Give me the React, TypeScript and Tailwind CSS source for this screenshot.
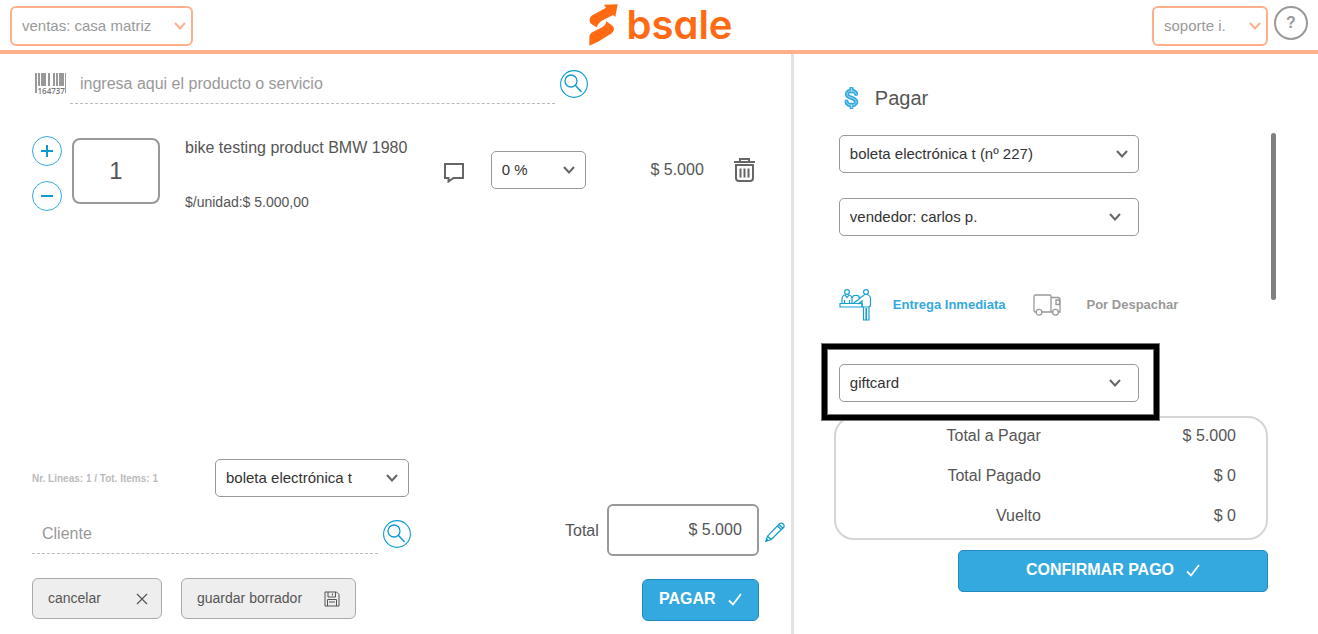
import { useState } from 'react';
import type { ReactNode } from 'react';
import clsx from 'clsx';

type SelectBoxProps = {
  label: string;
  options: string[];
  className?: string;
  tone?: 'dark' | 'orange';
  chevronClass?: string;
};

function Chevron({ className }: { className?: string }) {
  return (
    <svg viewBox="0 0 12 8" fill="none" stroke="currentColor" strokeWidth="2" className={className}>
      <path d="M1 1l5 5.500L11 1" />
    </svg>
  );
}

function SelectBox({ label, options, className, tone = 'dark', chevronClass = 'right-[11px]' }: SelectBoxProps) {
  return (
    <div className={clsx('relative', className)}>
      <select
        aria-label={label}
        className={clsx(
          'block w-full appearance-none bg-white pl-2.5 pr-7 text-[15px]',
          tone === 'orange'
            ? 'h-10 rounded-md border-2 border-[#ffb08a] text-[#999]'
            : 'h-[38px] rounded-[5px] border border-[#999] text-[#333]'
        )}
      >
        {options.map((option) => (
          <option key={option}>{option}</option>
        ))}
      </select>
      <Chevron
        className={clsx(
          'pointer-events-none absolute top-1/2 h-2 w-3 -translate-y-1/2',
          tone === 'orange' ? 'text-[#ffb08a]' : 'text-[#666]',
          chevronClass
        )}
      />
    </div>
  );
}

function SearchButton({ label }: { label: string }) {
  return (
    <button type="button" aria-label={label} className="h-7 w-7 shrink-0 rounded-full text-[#0b9bd0]">
      <svg viewBox="0 0 28 28" fill="none" stroke="currentColor" className="h-7 w-7">
        <circle cx="14" cy="14" r="13.400" strokeWidth="1.100" />
        <circle cx="11" cy="11" r="6" strokeWidth="1.300" />
        <path d="M15.300 15.300L21.500 22" strokeWidth="1.500" />
      </svg>
    </button>
  );
}

function RoundButton({ label, children }: { label: string; children: ReactNode }) {
  return (
    <button
      type="button"
      aria-label={label}
      className="flex h-[30px] w-[30px] items-center justify-center rounded-full border border-[#33a9dd] text-[#0b9bd0]"
    >
      <svg viewBox="0 0 12 12" stroke="currentColor" strokeWidth="2" className="h-3 w-3">
        {children}
      </svg>
    </button>
  );
}

function CheckIcon() {
  return (
    <svg viewBox="0 0 14 13" fill="none" stroke="currentColor" strokeWidth="1.800" className="h-[13px] w-3.5">
      <path d="M1 7.500L5 11.500L13 1" />
    </svg>
  );
}

function BarcodeIcon() {
  const bars = [
    [0, 2, 20], [3, 2, 13], [6, 3, 13], [9, 2, 13], [13, 2, 13],
    [18, 2, 13], [21, 2, 13], [24, 1, 13], [25, 4, 13], [30, 1, 20],
  ];
  return (
    <svg viewBox="0 0 31 22" fill="#999" className="h-[22px] w-[31px] shrink-0">
      {bars.map(([x, width, height]) => (
        <rect key={x} x={x} y="0" width={width} height={height} />
      ))}
      <text x="2.500" y="20.500" fontSize="8" fontFamily="Open Sans, sans-serif" fontWeight="600" fill="#777">
        164737
      </text>
    </svg>
  );
}

function Logo() {
  return (
    <a href="#" className="flex items-start gap-2 pl-1 text-[#ff6a13]">
      <svg viewBox="15 11 87 126" fill="currentColor" className="h-[42px] w-[29px]">
        <path d="M17 62Q16 51 25 45L66 22L60 13L101 12L94 50L87 44L56 60Q43 67 38 81L22 71Q17 68 17 62Z" />
        <path d="M16 136V112Q16 101 25 96L57 79Q67 73 66 63L83 74Q90 79 90 87Q89 95 81 100L42 124Z" />
      </svg>
      <span className="font-['Inter',sans-serif] text-[40px] leading-[42px] font-semibold [font-feature-settings:'cv11']">
        bsale
      </span>
    </a>
  );
}

function Header() {
  return (
    <header className="grid h-[54px] grid-cols-[1fr_auto_1fr] items-start border-b-4 border-[#ffb08a] px-2.5">
      <SelectBox
        label="Sucursal"
        tone="orange"
        options={['ventas: casa matriz']}
        className="mt-1.5 w-[183px]"
        chevronClass="right-[7px]"
      />
      <div className="pt-1">
        <Logo />
      </div>
      <div className="mt-1.5 flex items-start justify-end gap-1.5">
        <SelectBox
          label="Usuario"
          tone="orange"
          options={['soporte i.']}
          className="w-[116px]"
          chevronClass="right-[7px]"
        />
        <button
          type="button"
          className="h-[34px] w-[34px] rounded-full border-2 border-[#999] text-base leading-none font-bold text-[#999]"
        >
          ?
        </button>
      </div>
    </header>
  );
}

function ProductRow() {
  const [quantity, setQuantity] = useState('1');

  return (
    <div className="mt-8 flex items-start pr-[35px] pl-8">
      <div className="flex flex-col gap-[15px]">
        <RoundButton label="Agregar unidad">
          <path d="M6 0v12M0 6h12" />
        </RoundButton>
        <RoundButton label="Quitar unidad">
          <path d="M0 6h12" />
        </RoundButton>
      </div>
      <input
        aria-label="Cantidad"
        value={quantity}
        onChange={(e) => setQuantity(e.target.value)}
        className="mt-0.5 ml-2.5 h-[66px] w-[88px] rounded-lg border-2 border-[#999] text-center text-2xl text-[#555]"
      />
      <div className="ml-[25px] flex-1">
        <p className="text-base leading-6">bike testing product BMW 1980</p>
        <p className="mt-8 text-sm leading-5">$/unidad:$ 5.000,00</p>
      </div>
      <div className="flex h-[68px] items-center text-[#666]">
        <button type="button" aria-label="Comentario" className="mt-1.5">
          <svg viewBox="0 0 20 20" fill="none" stroke="currentColor" strokeWidth="2" className="h-5 w-5">
            <path d="M1 1h18v14H9.500L4.500 18.500V15H1z" />
          </svg>
        </button>
        <SelectBox label="Descuento" options={['0 %']} className="ml-[27px] w-[95px]" />
        <span className="w-[118px] text-right text-base text-[#555]">$ 5.000</span>
        <button type="button" aria-label="Eliminar" className="ml-[30px]">
          <svg viewBox="0 0 22 26" fill="none" stroke="currentColor" strokeWidth="2" className="h-[26px] w-[22px]">
            <path d="M0 5h21M6 4.500V2h9v2.500M2 8V21q0 3 3 3h11q3 0 3-3V8z" />
            <path d="M6.500 11.500v9M10.500 11.500v9M14.500 11.500v9" />
          </svg>
        </button>
      </div>
    </div>
  );
}

function SaleFooter() {
  const grayButton =
    'flex h-[41px] items-center justify-between rounded-md border border-[#aaa] bg-[#eee] px-[15px] pb-0.5 text-sm text-[#555]';

  return (
    <div className="mt-auto flex items-start justify-between pr-1.5 pb-[13px] pl-8">
      <div>
        <div className="flex items-center">
          <p className="w-[183px] text-[10px] font-bold text-[#bbb]">Nr. Lineas: 1 / Tot. Items: 1</p>
          <SelectBox label="Documento" options={['boleta electrónica t']} className="w-[194px]" />
        </div>
        <div className="mt-[17px] flex items-center gap-[5px]">
          <input
            aria-label="Cliente"
            placeholder="Cliente"
            className="h-10 w-[346px] border-b border-dashed border-[#bbb] px-2.5 text-base placeholder:text-[#999]"
          />
          <SearchButton label="Buscar cliente" />
        </div>
        <div className="mt-6 flex gap-[19px]">
          <button type="button" className={clsx(grayButton, 'w-[130px]')}>
            cancelar
            <svg viewBox="0 0 12 12" stroke="currentColor" strokeWidth="1.200" className="mt-0.5 -mr-0.5 h-3 w-3">
              <path d="M1 1l10 10M11 1L1 11" />
            </svg>
          </button>
          <button type="button" className={clsx(grayButton, 'w-[175px]')}>
            guardar borrador
            <svg viewBox="0 0 16 16" fill="none" stroke="currentColor" className="mt-0.5 h-4 w-4">
              <path d="M1 1h11.500L15 3.500V15H1z" />
              <path d="M3.500 15V8.500h9V15M4 1v5h7.500V1M8.500 2.500v2M5 11h6" />
            </svg>
          </button>
        </div>
      </div>
      <div className="mt-[45px]">
        <div className="flex items-center">
          <label htmlFor="total" className="mt-0.5 mr-2 text-base">
            Total
          </label>
          <input
            id="total"
            defaultValue="$ 5.000"
            className="h-[52px] w-[152px] rounded-md border-2 border-[#999] px-[15px] text-right text-base text-[#555]"
          />
          <button type="button" aria-label="Editar total" className="mt-1 ml-1.5 text-[#0b9bd0]">
            <svg viewBox="0 0 20 20" fill="none" stroke="currentColor" strokeWidth="1.200" className="h-5 w-5">
              <path d="M1 19.200l1.500-5L14.500 1.800q1.800-1.300 3.500 0t.800 3.500L6.200 17.500z" />
              <path d="M2.500 14.200l3.700 3.300M12.500 4l3.700 3.500M14 2.500l3.800 3.700M1 19l2-.700-1.300-1.300z" />
            </svg>
          </button>
        </div>
        <button
          type="button"
          className="mt-[23px] mr-[26px] ml-auto flex h-[42px] w-[117px] items-center justify-center gap-3 rounded-md border border-[#2489bd] bg-[#33a9df] pb-0.5 text-base font-bold text-white"
        >
          PAGAR
          <CheckIcon />
        </button>
      </div>
    </div>
  );
}

function DollarIcon() {
  const path = 'M12 7C12 3 3 2.500 3 7.200C3 11.500 12.200 10 12.200 15C12.200 19.500 2.500 19.500 2.500 14.500M7.500 1.500v3M7.500 17.500v3';
  return (
    <svg viewBox="0 0 15 22" fill="none" strokeLinecap="round" className="h-[22px] w-[15px]">
      <path d={path} stroke="#33a9df" strokeWidth="4.200" />
      <path d={path} stroke="#a5daf0" strokeWidth="1" />
    </svg>
  );
}

function CounterIcon() {
  return (
    <svg viewBox="0 0 33 32" fill="none" stroke="#1a9fd4" strokeWidth="1.200" className="h-8 w-[33px]">
      <circle cx="8" cy="3" r="2.400" />
      <path d="M3 14V10q0-3.500 3-4l2 2.500L10 6q3 .500 3 4v4M5.500 14v-3M10.500 14v-3" />
      <circle cx="27" cy="3" r="2.400" />
      <path d="M13 9q1-3 3.500-2.500Q20 6 20.500 9L24 7q1-1.500 3-1.500 4 0 4.500 4V15q0 3-2 3h-5q-1.500 0-1.500-2v-4l-4 3M14.500 14q4-2 7-5.500" />
      <path d="M1 14.500h22V18H1zM24.500 18v13h2.500V19M27.500 19v12H30V18" />
    </svg>
  );
}

function TruckIcon() {
  return (
    <svg viewBox="0 0 28 22" fill="none" stroke="#999" strokeWidth="1.300" className="h-[22px] w-7">
      <path d="M3.500 18H2.500Q1 18 1 16.500V2.500Q1 1 2.500 1h14Q18 1 18 2.500V18H8.800M18 3.500h7q2 0 2 2.500v12h-1.500M18 18h1.500" />
      <path d="M23 6h3.500v4.500H23z" />
      <circle cx="6" cy="18.300" r="2.900" />
      <circle cx="22.500" cy="18.300" r="2.900" />
    </svg>
  );
}

const totals = [
  { label: 'Total a Pagar', value: '$ 5.000' },
  { label: 'Total Pagado', value: '$ 0' },
  { label: 'Vuelto', value: '$ 0' },
];

function PaymentPanel() {
  return (
    <section className="flex-1 border-l-[3px] border-[#e2e2e2] pt-8 pr-[42px] pl-10">
      <h2 className="flex h-6 items-center gap-4 pl-2.5 text-xl">
        <DollarIcon />
        Pagar
      </h2>

      <div className="mt-[23px] flex items-start justify-between pl-[5px]">
        <div className="flex-1 pt-0.5">
          <SelectBox label="Tipo de documento" options={['boleta electrónica t (nº 227)']} className="w-[300px]" />
          <SelectBox
            label="Vendedor"
            options={['vendedor: carlos p.']}
            className="mt-[25px] w-[300px]"
            chevronClass="right-[18px]"
          />
          <div className="mt-[53px] flex items-center gap-[27px] text-[13px] font-bold">
            <button type="button" className="flex items-center gap-[21px] text-[#33a9dd]">
              <CounterIcon />
              Entrega Inmediata
            </button>
            <button type="button" className="flex items-center gap-[26px] text-[#999]">
              <TruckIcon />
              Por Despachar
            </button>
          </div>
        </div>
        {/* Scroll thumb */}
        <div className="h-[167px] w-[5px] rounded-full bg-[#808080]" />
      </div>

      {/* Payment method */}
      <div className="relative z-10 mt-[23px] -ml-3 w-fit border-[5px] border-black bg-white pt-[15px] pr-[15px] pb-[13px] pl-3 shadow-[0_0_0_1px_#777,inset_0_0_0_1px_#777]">
        <SelectBox label="Forma de pago" options={['giftcard']} className="w-[300px]" chevronClass="right-[18px]" />
      </div>

      <dl className="-mt-1 mr-2 rounded-[20px] border-2 border-[#d5d5d5] pr-[30px]">
        {totals.map((row) => (
          <div key={row.label} className="flex h-10 items-start justify-between text-base leading-9">
            <dt className="w-[205px] text-right">{row.label}</dt>
            <dd>{row.value}</dd>
          </div>
        ))}
      </dl>

      <button
        type="button"
        className="mt-2.5 mr-2 ml-auto flex h-[42px] w-[310px] items-center justify-center gap-3 rounded-[5px] border border-[#2489bd] bg-[#33a9df] pb-0.5 text-base font-bold text-white"
      >
        CONFIRMAR PAGO
        <CheckIcon />
      </button>
    </section>
  );
}

export default function App() {
  return (
    <div className="flex min-h-screen flex-col bg-white font-['Liberation_Sans',Arial,sans-serif] text-[#555]">
      <Header />
      <main className="flex flex-1">
        <section className="flex w-3/5 flex-col">
          <div className="flex items-center pt-2.5 pl-[35px]">
            <BarcodeIcon />
            <input
              aria-label="Producto o servicio"
              placeholder="ingresa aqui el producto o servicio"
              className="ml-1 h-10 w-[485px] border-b border-dashed border-[#bbb] px-2.5 text-base placeholder:text-[#999]"
            />
            <div className="ml-[5px] flex">
              <SearchButton label="Buscar producto" />
            </div>
          </div>
          <ProductRow />
          <SaleFooter />
        </section>
        <PaymentPanel />
      </main>
    </div>
  );
}
